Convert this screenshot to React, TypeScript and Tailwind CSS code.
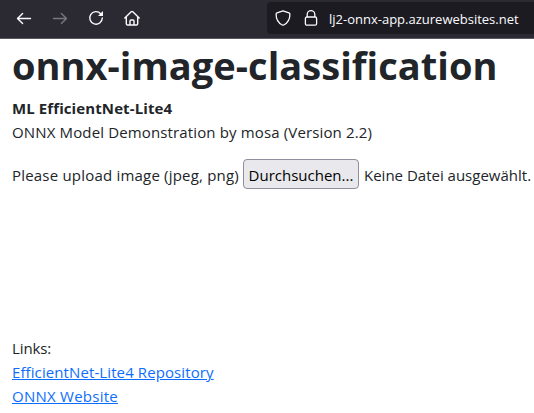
export default function App() {
  return (
    <div className="flex h-[413px] w-[534px] flex-col overflow-hidden bg-white font-['Open_Sans','Noto_Sans',sans-serif] text-[15px] leading-6 whitespace-nowrap text-[#212529]">
      <header className="flex h-[39px] shrink-0 items-start border-b border-[#5b5866] bg-[#2b2a33] text-[#fbfbfe]">
        <nav className="flex gap-5 pt-[10px] pl-4">
          <button aria-label="Zurück">
            <svg className="size-4" viewBox="0 0 16 16" fill="none" stroke="currentColor" strokeWidth="1.4" strokeLinecap="round" strokeLinejoin="round">
              <path d="M14.5 8.5H1.700M6.600 3.400L1.500 8.500l5.100 5.100" />
            </svg>
          </button>
          <button aria-label="Vor" className="text-[#77767e]">
            <svg className="size-4" viewBox="0 0 16 16" fill="none" stroke="currentColor" strokeWidth="1.4" strokeLinecap="round" strokeLinejoin="round">
              <path d="M1.500 8.500h12.800M9.400 3.400l5.100 5.100-5.100 5.100" />
            </svg>
          </button>
          <button aria-label="Neu laden">
            <svg className="size-4" viewBox="0 0 16 16" fill="none" stroke="currentColor" strokeWidth="1.4" strokeLinecap="round">
              <path d="M12.700 3.700A6.300 6.300 0 1 0 14.300 8" />
              <path d="M15 1v4.500a.5.5 0 0 1-.5.5H10z" fill="currentColor" stroke="none" />
            </svg>
          </button>
          <button aria-label="Startseite">
            <svg className="size-4" viewBox="0 0 16 16" fill="none" stroke="currentColor" strokeWidth="1.4" strokeLinecap="round" strokeLinejoin="round">
              <path d="M.8 8.100L7.200 1.800q.8-.7 1.600 0l6.400 6.300M2.300 7v6.700q0 1.300 1.300 1.300h8.800q1.300 0 1.300-1.300V7M6 15v-4q0-1 1-1h2q1 0 1 1v4" />
            </svg>
          </button>
        </nav>
        <div className="mt-[2px] ml-[127px] flex h-8 flex-1 items-center rounded-l bg-[#1c1b22] pl-2">
          <svg className="h-4 w-4" viewBox="0 0 16 16" fill="none" stroke="currentColor" strokeWidth="1.3" strokeLinejoin="round">
            <path d="M8 .8l6 2.100q.9.4.9 1.300c0 4.800-2.300 8.800-6.200 10.800q-.7.4-1.400 0C3.400 13 1.100 9 1.100 4.200q0-.9.9-1.300z" />
          </svg>
          <svg className="ml-3 h-4 w-4" viewBox="0 0 16 16" fill="none" stroke="currentColor" strokeWidth="1.3">
            <rect x="2.400" y="7" width="11.200" height="8.200" rx="1.500" />
            <path d="M4.200 7V4.400a3.800 3.800 0 0 1 7.600 0V7" />
          </svg>
          <span className="mt-px ml-[10px] text-[13px]">lj2-onnx-app.azurewebsites.net</span>
        </div>
      </header>
      <main className="flex flex-col items-start pl-3">
        <h1 className="mt-[2px] h-12 text-[38px] leading-[48px] font-bold tracking-[0.04px]">onnx-image-classification</h1>
        <p className="mt-[7px] font-bold tracking-[0.1px]">ML EfficientNet-Lite4</p>
        <p className="tracking-[0.14px]">ONNX Model Demonstration by mosa (Version 2.2)</p>
        <div className="mt-[15px] flex h-[30px] items-center">
          <span className="mt-[2px] w-[231px] tracking-[0.2px]">Please upload image (jpeg, png)</span>
          <button className="h-[30px] w-[116px] rounded-[4px] border border-[#8f8f9d] bg-[#e9e9ed] pt-[2px] text-black">Durchsuchen...</button>
          <span className="mt-[2px] ml-[5px]">Keine Datei ausgewählt.</span>
        </div>
        <p className="mt-[147px] tracking-[-0.1px]">Links:</p>
        <a className="tracking-[0.1px] text-[#0d6efd] underline" href="#repository">EfficientNet-Lite4 Repository</a>
        <a className="tracking-[0.25px] text-[#0d6efd] underline" href="#website">ONNX Website</a>
      </main>
    </div>
  );
}
